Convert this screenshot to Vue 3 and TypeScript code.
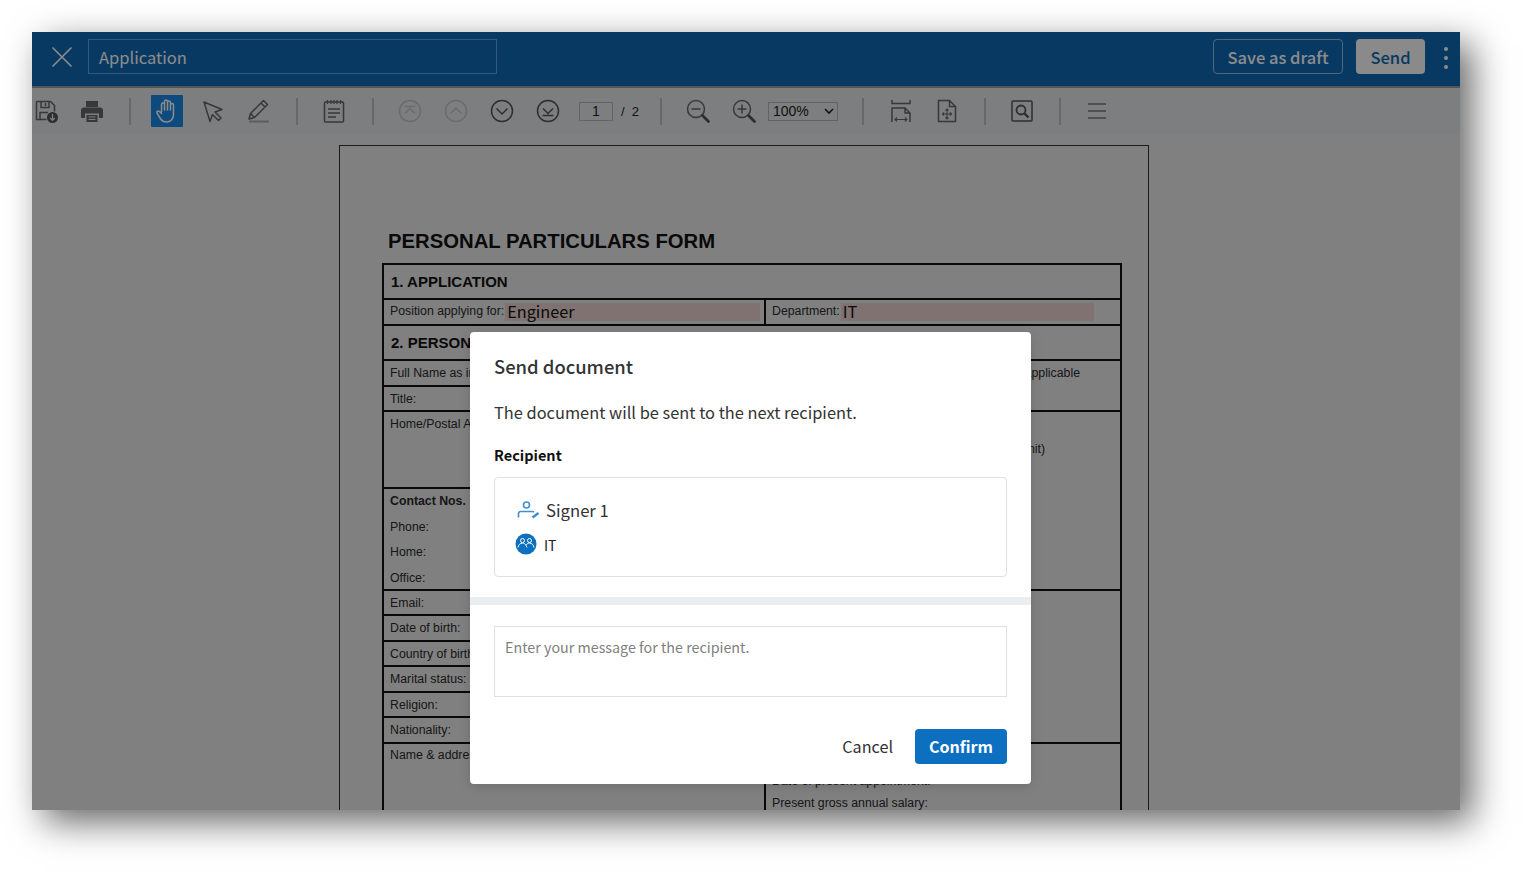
<template>
  <div class="stage">
    <div class="window">
      <header class="topbar">
        <button class="close" aria-label="Close">
          <svg width="22" height="22" viewBox="0 0 22 22" fill="none" stroke="#fff" stroke-width="1.6"><path d="M1.5 1.5l19 19M20.5 1.5l-19 19" /></svg>
        </button>
        <div class="title-input">Application</div>
        <div class="spacer"></div>
        <button class="btn-outline">Save as draft</button>
        <button class="btn-send">Send</button>
        <div class="dots"><i></i><i></i><i></i></div>
      </header>

      <div class="toolbar">
        <svg class="ico" viewBox="0 0 28 28" fill="none" stroke="#666" stroke-width="1.5">
          <path d="M4.5 4.5h14l4 4v6M4.5 4.5v18h10" />
          <path d="M9 4.5v6h8v-6M13.5 6v3M8 22.5v-7h8" />
          <circle cx="20.5" cy="20.5" r="5.5" fill="#555" stroke="none" />
          <path d="M20.5 17v6M18.2 21l2.3 2.3 2.3-2.3" stroke="#e3e5e7" stroke-width="1.3" />
        </svg>
        <svg class="ico" viewBox="0 0 28 28" fill="#666">
          <path d="M8 4h12v6H8z" />
          <path d="M6 10.500h16a3 3 0 0 1 3 3V21h-4v-4.500H7V21H3v-7.500a3 3 0 0 1 3-3z" />
          <path d="M8.500 18h11v7h-11z" />
          <path d="M10.500 20h7M10.500 22.500h7" stroke="#e3e5e7" stroke-width="1" />
        </svg>
        <span class="sep"></span>
        <span class="ico-active">
          <svg width="24" height="26" viewBox="0 0 24 26" fill="none" stroke="#fff" stroke-width="1.500" stroke-linecap="round" stroke-linejoin="round">
            <path d="M6.500 14V6.500a1.500 1.500 0 0 1 3 0V12M9.500 12V3.500a1.500 1.500 0 0 1 3 0V12M12.500 12V4.500a1.500 1.500 0 0 1 3 0V12M15.500 12V7a1.500 1.500 0 0 1 3 0v9.500c0 4.500-3 7.500-7 7.500-3.500 0-5-1.500-6.500-4l-3-5c-.8-1.500 1.200-2.800 2.400-1.500l2.100 2" />
          </svg>
        </span>
        <svg class="ico" viewBox="0 0 28 28" fill="none" stroke="#666" stroke-width="1.500" stroke-linejoin="round">
          <path d="M5 5l18 7.500-7 2.500 6 6-2.500 2.500-6-6L11 24.500z" />
        </svg>
        <svg class="ico" viewBox="0 0 28 28" fill="none" stroke="#666" stroke-width="1.500" stroke-linejoin="round">
          <path d="M4 22l1.500-5.500L18.500 3.500l4 4-13 13zM16 6l4 4M5.500 16.500l4 4" />
          <path d="M4 24.500h20" stroke="#aaa" stroke-width="2" />
        </svg>
        <span class="sep"></span>
        <svg class="ico" viewBox="0 0 28 28" fill="none" stroke="#666" stroke-width="1.500">
          <rect x="4.500" y="5" width="19" height="20" rx="1" />
          <path d="M7.500 3v4M11 3v4M14 3v4M17 3v4M20.500 3v4" stroke-width="1.200" />
          <path d="M8 12h12M8 16h12M8 20h8" />
        </svg>
        <span class="sep nudge"></span>
        <svg class="ico" viewBox="0 0 28 28" fill="none" stroke="#c4c4c4" stroke-width="1.500">
          <circle cx="14" cy="14" r="10.500" />
          <path d="M8.500 9.500h11M9 16.500l5-5 5 5" />
        </svg>
        <svg class="ico" viewBox="0 0 28 28" fill="none" stroke="#c4c4c4" stroke-width="1.500">
          <circle cx="14" cy="14" r="10.500" />
          <path d="M8.500 16.500L14 11l5.500 5.500" />
        </svg>
        <svg class="ico" viewBox="0 0 28 28" fill="none" stroke="#555" stroke-width="1.500">
          <circle cx="14" cy="14" r="10.500" />
          <path d="M8.500 11.500L14 17l5.500-5.500" />
        </svg>
        <svg class="ico" viewBox="0 0 28 28" fill="none" stroke="#555" stroke-width="1.500">
          <circle cx="14" cy="14" r="10.500" />
          <path d="M8.500 18.500h11M9 11.500l5 5 5-5" />
        </svg>
        <div class="pager">
          <span class="page-input">1</span>
          <span class="page-total">/&nbsp; 2</span>
        </div>
        <span class="sep"></span>
        <svg class="ico" viewBox="0 0 28 28" fill="none" stroke="#666" stroke-width="1.500">
          <circle cx="12" cy="12" r="8.500" />
          <path d="M7.500 12h9" />
          <path d="M18.500 18.500l6 6" stroke="#555" stroke-width="2.800" stroke-linecap="round" />
        </svg>
        <svg class="ico" viewBox="0 0 28 28" fill="none" stroke="#666" stroke-width="1.500">
          <circle cx="12" cy="12" r="8.500" />
          <path d="M7.500 12h9M12 7.500v9" />
          <path d="M18.500 18.500l6 6" stroke="#555" stroke-width="2.800" stroke-linecap="round" />
        </svg>
        <div class="zoom-select">
          <span>100%</span>
          <svg width="10" height="7" viewBox="0 0 10 7" fill="none" stroke="#222" stroke-width="1.600"><path d="M1 1l4 4 4-4" /></svg>
        </div>
        <span class="sep"></span>
        <svg class="ico shift" viewBox="0 0 28 28" fill="none" stroke="#666" stroke-width="1.500">
          <path d="M5 3v3.500h18V3" />
          <path d="M5 25V11h13l5 5v9M18 11v5h5" />
          <path d="M8 22.500h12M10 20.500l-2 2 2 2M18 20.500l2 2-2 2" stroke-width="1.100" />
        </svg>
        <svg class="ico" viewBox="0 0 28 28" fill="none" stroke="#666" stroke-width="1.500">
          <path d="M5.500 3.500h11l6 6v15h-17zM16.500 3.500v6h6" />
          <path d="M14 12v10M9.500 17h9M12.500 13.500L14 12l1.500 1.500M12.500 20.500L14 22l1.500-1.500M11 15.500L9.500 17l1.500 1.500M17 15.500l1.500 1.500-1.500 1.500" stroke-width="1.100" />
        </svg>
        <span class="sep"></span>
        <svg class="ico" viewBox="0 0 28 28" fill="none" stroke="#555" stroke-width="1.500">
          <rect x="4" y="4" width="20" height="20" rx="1" />
          <circle cx="13" cy="13" r="4.500" stroke-width="1.800" />
          <path d="M16.500 16.500l4 4" stroke-width="2.400" />
        </svg>
        <span class="sep"></span>
        <svg class="ico" viewBox="0 0 28 28" fill="none" stroke="#777" stroke-width="1.500">
          <path d="M5 7h18M5 14h18M5 21h18" />
        </svg>
      </div>

      <main class="viewer">
        <div class="page">
          <h1>PERSONAL PARTICULARS FORM</h1>
          <table>
            <colgroup><col class="col-left" /><col /></colgroup>
            <tbody>
              <tr class="h35"><td colspan="2" class="section">1. APPLICATION</td></tr>
              <tr class="h26">
                <td>Position applying for:<span class="field">Engineer</span></td>
                <td>Department:<span class="field wide">IT</span></td>
              </tr>
              <tr class="h35"><td colspan="2" class="section">2. PERSONAL PARTICULARS</td></tr>
              <tr class="h26">
                <td>Full Name as in NRIC/Passport:</td>
                <td rowspan="2" class="top"><div class="far-line">Former name, if applicable</div></td>
              </tr>
              <tr class="h25"><td>Title:</td></tr>
              <tr class="h77">
                <td class="top home">Home/Postal Address:</td>
                <td rowspan="2" class="top"><div class="far-line second">Period of stay (month/unit)</div></td>
              </tr>
              <tr class="h102">
                <td class="top">
                  <div class="lines"><b>Contact Nos.</b><br />Phone:<br />Home:<br />Office:</div>
                </td>
              </tr>
              <tr class="h25">
                <td>Email:</td>
                <td rowspan="6"></td>
              </tr>
              <tr class="h26"><td>Date of birth:</td></tr>
              <tr class="h25"><td>Country of birth:</td></tr>
              <tr class="h26"><td>Marital status:</td></tr>
              <tr class="h25"><td>Religion:</td></tr>
              <tr class="h26"><td>Nationality:</td></tr>
              <tr class="h120">
                <td class="top name">Name &amp; address of employer:</td>
                <td class="top">
                  <div class="salary">Date of present appointment:<br />Present gross annual salary:</div>
                </td>
              </tr>
            </tbody>
          </table>
        </div>
      </main>

      <div class="overlay">
        <section class="modal">
          <h2>Send document</h2>
          <p class="lead">The document will be sent to the next recipient.</p>
          <h3>Recipient</h3>
          <div class="recipient">
            <div class="signer">
              <svg width="24" height="18" viewBox="0 0 24 18" fill="none" stroke="#3f8fd8" stroke-width="1.600">
                <circle cx="9.500" cy="4" r="3" />
                <path d="M1.500 16.500v-4a2 2 0 0 1 2-2h12a2 2 0 0 1 1.500.8" />
                <path d="M15.500 16.500l6-4.500" stroke-width="2.600" />
              </svg>
              <span>Signer 1</span>
            </div>
            <div class="group">
              <svg width="22" height="22" viewBox="0 0 22 22" fill="none" stroke="#fff" stroke-width="1">
                <circle cx="11" cy="11" r="10.500" fill="#0d6fc0" stroke="none" />
                <circle cx="7.500" cy="7.500" r="2" />
                <circle cx="14.500" cy="7.500" r="2" />
                <path d="M3 14.500c.5-2.800 2.200-4.400 4.500-4.400 1.600 0 2.800.8 3.500 2.200.7-1.400 1.900-2.200 3.500-2.200 2.300 0 4 1.600 4.500 4.400M11 12.300l1 2.200" />
              </svg>
              <span>IT</span>
            </div>
          </div>
          <div class="divider"></div>
          <div class="message">Enter your message for the recipient.</div>
          <footer>
            <button class="cancel">Cancel</button>
            <button class="confirm">Confirm</button>
          </footer>
        </section>
      </div>
    </div>
  </div>
</template>

<script setup lang="ts">
// static screen, nothing to wire up
</script>

<style>
html,
body {
  background: #fff;
}
</style>

<style scoped>
.stage {
  width: 1525px;
  height: 875px;
  padding: 32px 0 0 32px;
  box-sizing: border-box;
  overflow: hidden;
  font-family: "Noto Sans CJK JP", "Noto Sans", sans-serif;
}
.window {
  position: relative;
  width: 1428px;
  height: 778px;
  background: #e9e9e9;
  display: flex;
  flex-direction: column;
  box-shadow: 12px 12px 34px rgba(0, 0, 0, 0.6);
}
button {
  font-family: inherit;
  cursor: pointer;
}

.topbar {
  height: 56px;
  box-sizing: border-box;
  flex: none;
  display: flex;
  align-items: center;
  padding-bottom: 5px;
  background: #0d69b4;
  border-bottom: 2px solid #9b9b9b;
}
.close {
  width: 22px;
  height: 22px;
  padding: 0;
  margin: 1px 15px 0 19px;
  border: 0;
  background: none;
  display: flex;
}
.title-input {
  width: 409px;
  height: 35px;
  box-sizing: border-box;
  border: 1px solid #5da2dc;
  color: #fff;
  font-size: 16.500px;
  line-height: 35px;
  padding-left: 10px;
}
.spacer {
  flex: 1;
}
.btn-outline,
.btn-send {
  height: 35px;
  border-radius: 4px;
  font-size: 16.500px;
  font-weight: 500;
  padding: 0;
}
.btn-outline {
  width: 130px;
  background: none;
  border: 1px solid #8fbde4;
  color: #fff;
}
.btn-send {
  width: 69px;
  margin-left: 13px;
  background: #fbfbfb;
  border: 0;
  color: #0d69b4;
}
.dots {
  width: 35px;
  box-sizing: border-box;
  padding: 2px 0 0 6px;
  display: flex;
  flex-direction: column;
  align-items: center;
  gap: 5px;
}
.dots i {
  width: 4px;
  height: 4px;
  border-radius: 50%;
  background: #fff;
}

.toolbar {
  height: 46px;
  flex: none;
  display: flex;
  align-items: center;
  gap: 18px;
  background: #e3e5e7;
}
.ico {
  width: 28px;
  height: 28px;
  flex: none;
}
.ico.shift {
  margin-left: 1px;
}
.ico-active {
  width: 32px;
  height: 32px;
  margin: 0 -2px;
  flex: none;
  background: #1b87e3;
  border-radius: 1px;
  display: flex;
  align-items: center;
  justify-content: center;
}
.sep {
  width: 2px;
  height: 27px;
  margin: 0 4.500px;
  flex: none;
  background: #bdbdbd;
}
.sep.nudge {
  margin-left: 5.500px;
}
.pager {
  width: 60px;
  margin: 0 -2px 0 -1px;
  flex: none;
  display: flex;
  align-items: center;
  font-family: "Liberation Sans", sans-serif;
  font-size: 13px;
  color: #222;
}
.page-input {
  width: 36px;
  height: 19px;
  box-sizing: border-box;
  border: 1px solid #b4b4b4;
  text-align: center;
  font-size: 14px;
  line-height: 17px;
}
.page-total {
  margin-left: 8px;
  white-space: nowrap;
}
.zoom-select {
  width: 70px;
  height: 19px;
  margin: 0 1px 0 -8px;
  box-sizing: border-box;
  flex: none;
  border: 1px solid #b4b4b4;
  display: flex;
  align-items: center;
  justify-content: space-between;
  padding: 0 3px 0 4px;
  font-family: "Liberation Sans", sans-serif;
  font-size: 14px;
  color: #222;
}

.viewer {
  flex: 1;
  min-height: 0;
  overflow: hidden;
  padding: 11px 0 0 307px;
}
.page {
  width: 810px;
  height: 800px;
  box-sizing: border-box;
  border: 1px solid #333;
  padding: 82px 26px 0 43px;
  font-family: "Liberation Sans", sans-serif;
  color: #111;
}
h1 {
  margin: 0 0 9px 5px;
  font-size: 20.300px;
  line-height: 26px;
  font-weight: 700;
  color: #111;
}
table {
  width: 740px;
  margin-left: -1px;
  table-layout: fixed;
  border-collapse: collapse;
  border: 2px solid #111;
}
.col-left {
  width: 382px;
}
td {
  border: 2px solid #111;
  padding: 0 5px 0 6px;
  font-size: 12.300px;
  line-height: 14px;
  color: #2a2a2a;
  vertical-align: middle;
  white-space: nowrap;
  overflow: hidden;
}
td.top {
  vertical-align: top;
  padding-top: 5px;
}
td.top.home {
  padding-top: 5px;
}
td.top.name {
  padding-top: 4px;
}
td.section {
  font-size: 15px;
  font-weight: 700;
  color: #111;
  padding-left: 7px;
}
.h25 { height: 25px; }
.h26 { height: 26px; }
.h35 { height: 35px; }
.h77 { height: 77px; }
.h102 { height: 102px; }
.h120 { height: 120px; }

.field {
  display: inline-block;
  width: 255px;
  height: 18px;
  margin-left: 1px;
  padding-left: 2px;
  box-sizing: border-box;
  vertical-align: middle;
  background: #e7d0ce;
  font-family: "Noto Sans CJK JP", "Noto Sans", sans-serif;
  font-size: 16.300px;
  line-height: 17px;
  color: #111;
}
.field.wide {
  width: 253px;
}
.far-line {
  text-align: right;
  width: 308px;
}
.far-line.second {
  width: 273px;
  margin-top: 25px;
}
.lines {
  line-height: 25.500px;
  margin: -5px 0 -3px;
}
.salary {
  margin-top: 21px;
  line-height: 22px;
}

.overlay {
  position: absolute;
  inset: 0;
  padding: 300px 0 0 438px;
  background: rgba(0, 0, 0, 0.45);
}
.modal {
  width: 561px;
  height: 452px;
  box-sizing: border-box;
  padding: 23px 24px 0;
  background: #fff;
  border-radius: 4px;
  box-shadow: 0 2px 12px rgba(0, 0, 0, 0.15);
  color: #333;
  display: flex;
  flex-direction: column;
}
h2 {
  margin: 0;
  font-size: 18.400px;
  line-height: 22px;
  font-weight: 500;
}
.lead {
  margin: 23px 0 0;
  font-size: 16.400px;
  line-height: 24px;
}
h3 {
  margin: 19px 0 0;
  font-size: 14.500px;
  line-height: 24px;
  font-weight: 700;
  color: #111;
}
.recipient {
  height: 100px;
  margin-top: 10px;
  box-sizing: border-box;
  flex: none;
  border: 1px solid #e0e0e0;
  border-radius: 4px;
  padding: 20px 0 0 20px;
}
.signer {
  display: flex;
  align-items: center;
  gap: 5px;
  height: 24px;
  margin-left: 2px;
  font-size: 16.700px;
}
.group {
  display: flex;
  align-items: center;
  gap: 7px;
  margin-top: 11px;
  height: 22px;
  font-size: 14px;
  color: #222;
}
.group span {
  margin-top: 2px;
}
.divider {
  height: 8px;
  margin: 20px -24px 0;
  flex: none;
  background: #ebeef1;
}
.message {
  height: 71px;
  margin-top: 21px;
  box-sizing: border-box;
  flex: none;
  border: 1px solid #e0e0e0;
  padding: 8px 10px;
  font-size: 14.300px;
  line-height: 24px;
  color: #808080;
}
footer {
  display: flex;
  justify-content: flex-end;
  align-items: center;
  margin-top: 32px;
  gap: 22px;
}
.cancel {
  border: 0;
  background: none;
  padding: 0 0 2px;
  font-size: 16.200px;
  color: #333;
}
.confirm {
  width: 92px;
  height: 35px;
  border: 0;
  border-radius: 4px;
  padding: 0 0 2px;
  background: #0d6fc0;
  color: #fff;
  font-size: 16px;
  font-weight: 700;
}
</style>
